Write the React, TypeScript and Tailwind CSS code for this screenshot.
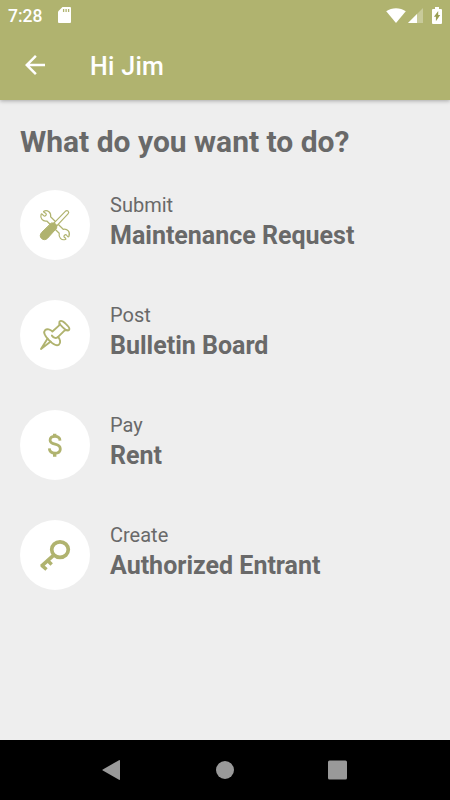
import React from "react";

type Action = {
    label: string;
    title: string;
    icon: React.ReactNode;
};

const ToolsIcon = () => (
    <svg viewBox="0 0 32 32" className="w-8 h-8" fill="none" stroke="#b0b36f" strokeLinejoin="round" strokeLinecap="round">
        <path
            strokeWidth="1.2"
            d="M4.800 2.200C8.600.600 12.400 3.600 11.600 7.800l12.600 12.500c4.300-.8 7.400 2.900 5.700 7.100-.4.700-.9.600-1.300.1l-1.200-1.500c-1-.9-3.200.7-2.300 2l1.500 1.300c.5.500.4 1-.3 1.200-3.900 1.100-6.900-2.100-6.100-6.200L7.800 12C3.800 12.700.800 9.300 2.100 5.500c.3-.7.8-.7 1.300-.2l1.200 1.300c1.300 1.200 3.500-.6 2.400-2L5 3.300c-.5-.5-.6-.9-.2-1.100z"
        />
        <path fill="white" strokeWidth="1.2" d="M14.400 14.700 26.300 2.300c1.100-1 2.100-.9 2.800-.2s.8 1.800-.1 2.800L17.500 17.200z" />
        <path fill="#b0b36f" strokeWidth="1" d="M12.600 14h2.900l2.200 2.200v2.900L8.600 29.200c-1.800 1.900-4.400 1.900-6.100.3-1.700-1.600-1.700-4.100.1-6z" />
    </svg>
);

const PinIcon = () => (
    <svg viewBox="0 0 32 32" className="w-8 h-8" fill="none" stroke="#b0b36f" strokeWidth="1.900" strokeLinejoin="round" strokeLinecap="round">
        <path d="M20.700 2.400c1.400-1.200 3.700.100 6.100 2.500 2.600 2.400 4.200 4.900 3.200 6.100-1.300 1.100-3.800-.3-6.200-2.600-2.500-2.400-4.200-4.700-3.100-6z" />
        <path d="M20.400 4.800 20.200 6.400 13.400 12.500c-1.800-2.200-5.500-3-7.300-1.400-1.900 2 .1 6.200 3.800 10s7.900 6.200 10.200 4.300c1.800-1.700 1.200-5.200-1-7.500L25.700 11.400 28 11.300" />
        <path d="M12.900 16.600c1.700 2.400 4.500 3.200 6.200 1.300" />
        <path d="M8.600 19.500 2 30l9.700-7.500" />
    </svg>
);

const DollarIcon = () => (
    <svg viewBox="0 0 32 32" className="w-8 h-8" fill="none" stroke="#b0b36f">
        <path strokeWidth="2.800" d="M21 11.600c-.1-2.500-2-4.200-5-4.200-2.900 0-4.900 1.400-4.900 3.800 0 2.300 1.600 3.200 4.900 4 3.700.9 5.300 2.200 5.300 4.700 0 2.700-2.100 4.200-5.300 4.200-3.400 0-5.500-1.700-5.700-4.800" />
        <path strokeWidth="3.400" d="M15.700 4.700v3M15.700 23.700v4" />
    </svg>
);

const KeyIcon = () => (
    <svg viewBox="0 0 32 32" className="w-8 h-8" fill="none" stroke="#b0b36f">
        <ellipse cx="21" cy="10.600" rx="8.300" ry="7.800" strokeWidth="3.700" />
        <path strokeWidth="3.700" d="M15.300 15.700 2.200 27.300" />
        <path strokeWidth="3.500" d="m2.500 26.200 5 4.300M8.800 21.700l3.900 3.700" />
    </svg>
);

const actions: Action[] = [
    { label: "Submit", title: "Maintenance Request", icon: <ToolsIcon /> },
    { label: "Post", title: "Bulletin Board", icon: <PinIcon /> },
    { label: "Pay", title: "Rent", icon: <DollarIcon /> },
    { label: "Create", title: "Authorized Entrant", icon: <KeyIcon /> },
];

const StatusBar = () => (
    <div className="flex items-center h-[30px] px-2 text-white">
        <span className="text-[17.5px] leading-[30px] pt-px font-medium">7:28</span>
        <svg viewBox="0 0 13 16" className="w-[13px] h-4 ml-4">
            <path fill="white" d="M4.500 0H12a1 1 0 0 1 1 1v14a1 1 0 0 1-1 1H1a1 1 0 0 1-1-1V4.500z" />
            <path stroke="#b0b36f" strokeWidth="1.300" d="M5.600 2v3M8.100 2v3M10.600 2v3" />
        </svg>
        <svg viewBox="0 0 20 15" className="w-5 h-[15px] ml-auto">
            <path fill="white" d="M.2 3.200C6-.9 14-.9 19.800 3.200L10 15z" />
        </svg>
        <svg viewBox="0 0 15 15" className="w-[15px] h-[15px] ml-[2px]">
            <path fill="white" fillOpacity=".3" d="M15 0v15H0z" />
            <path fill="white" d="M9 6v9H0z" />
        </svg>
        <svg viewBox="0 0 10 17" className="w-[10px] h-[17px] ml-[9px]">
            <path fill="white" d="M3 0h4v2h2a1 1 0 0 1 1 1v13a1 1 0 0 1-1 1H1a1 1 0 0 1-1-1V3a1 1 0 0 1 1-1h2z" />
            <path fill="#9a9e55" d="M6.200 4v4h2L3.900 14.200v-4.400H1.900z" />
        </svg>
    </div>
);

const ActionRow = ({ label, title, icon }: Action) => (
    <button className="flex w-full items-start gap-x-5 text-left text-[#696969]">
        <span className="flex items-center justify-center w-[70px] h-[70px] rounded-full bg-white shrink-0">
            {icon}
        </span>
        <span className="flex flex-col">
            <span className="text-[20px] leading-[30px]">{label}</span>
            <span className="text-[25px] leading-[31px] font-bold">
                {title}
            </span>
        </span>
    </button>
);

export default function App() {
    return (
        <div className="flex flex-col w-full h-screen overflow-hidden bg-[#eeeeee] font-[Roboto,sans-serif]">
            <header className="relative h-[100px] shrink-0 bg-[#b0b36f] shadow-[0_1px_4px_rgba(0,0,0,0.3)]">
                <StatusBar />
                <div className="flex items-center h-[70px] px-5 gap-x-10 text-white">
                    <svg viewBox="0 0 24 24" className="w-[30px] h-[30px]" fill="white">
                        <path d="M20 11H7.830l5.590-5.590L12 4l-8 8 8 8 1.410-1.410L7.830 13H20z" />
                    </svg>
                    <h1 className="pt-1 text-[25px] leading-[30px] tracking-[0.3px] font-medium">
                        Hi Jim
                    </h1>
                </div>
            </header>
            <main className="flex-1 px-5 pt-6">
                <h2 className="text-[30px] leading-9 font-bold text-[#696969]">
                    What do you want to do?
                </h2>
                <div className="flex flex-col gap-y-10 mt-[30px]">
                    {actions.map((action) => (
                        <ActionRow key={action.title} {...action} />
                    ))}
                </div>
            </main>
            <nav className="flex items-center justify-center h-[60px] shrink-0 bg-black">
                <svg viewBox="0 0 260 30" className="w-[260px] h-[30px]" fill="#999">
                    <path d="M24 5.200q1-.5 1 .6v18.400q0 1.100-1 .6L7.800 15.600q-1-.6 0-1.200z" />
                    <circle cx="130" cy="15" r="9" />
                    <rect x="233" y="5.500" width="19" height="19" rx="1.500" />
                </svg>
            </nav>
        </div>
    );
}
